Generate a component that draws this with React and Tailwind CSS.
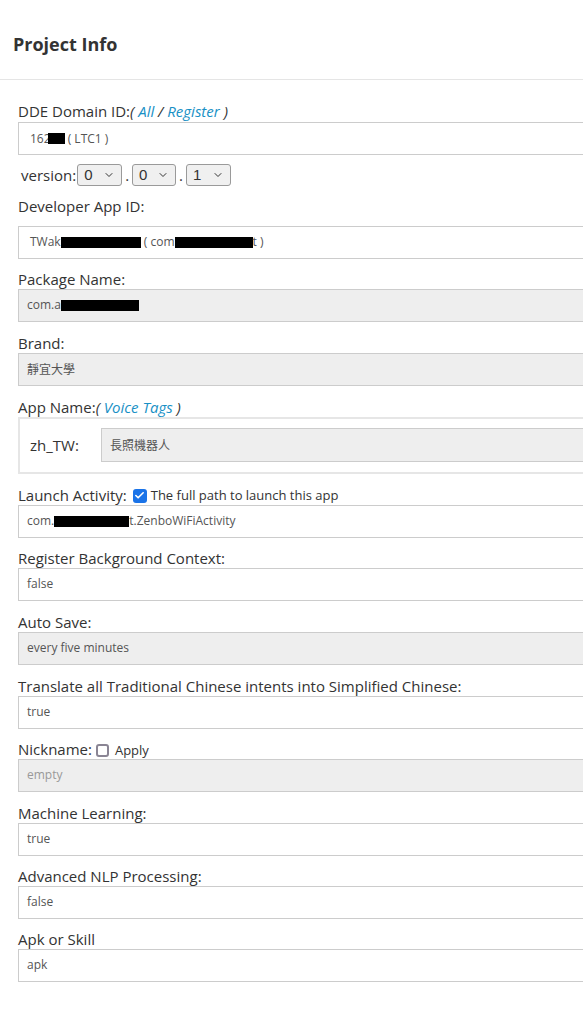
import { Check, ChevronDown } from "lucide-react";

const Redact = ({ w, className = "" }) => (
  <span className={`inline-block h-[11px] bg-black align-[-1px] ${className}`} style={{ width: w }} />
);

const Field = ({ label, children, gray, muted, mb = "mb-[11px]" }) => (
  <div className={mb}>
    <div className="text-[15px] leading-[20px] text-[#333]">{label}</div>
    <div
      className={`w-[600px] h-[33px] border border-[#ccc] flex items-center pl-[8px] text-[12px] ${
        gray ? "bg-[#eee]" : "bg-white"
      } ${muted ? "text-[#999]" : "text-[#555]"}`}
    >
      {children}
    </div>
  </div>
);

const VersionSelect = ({ value, w }) => (
  <div
    className={`${w} h-[22px] rounded-[3px] border border-[#9a9a9a] bg-[#f0f0f0] flex items-center justify-between pl-[6px] pr-[6px] font-['Liberation_Sans',sans-serif] text-[15px] text-[#333]`}
  >
    <span>{value}</span>
    <ChevronDown size={12} strokeWidth={2} className="text-[#333]" />
  </div>
);

const Link = ({ children }) => <span className="italic text-[#1890c5]">{children}</span>;

const App = () => {
  return (
    <div className="w-[583px] min-h-[1018px] bg-white overflow-hidden font-['Open_Sans',sans-serif] text-[#333]">
      <div className="h-[80px] border-b border-[#e5e5e5] flex items-center pl-[13px]">
        <h1 className="text-[18px] font-bold text-[#333] mt-[10px]">Project Info</h1>
      </div>

      <form className="pl-[18px] pt-[21px]">
        <div>
          <div className="text-[15px] leading-[20px]">
            DDE Domain ID:<span className="italic">(</span> <Link>All</Link> <span className="italic">/</span> <Link>Register</Link>{" "}
            <span className="italic">)</span>
          </div>
          <div className="w-[600px] h-[33px] border border-[#ccc] flex items-center pl-[11px] text-[12px] text-[#555] mt-[1px]">
            162
            <Redact w="17px" className="ml-[-3px]" />
            &nbsp;( LTC1 )
          </div>
        </div>

        <div className="flex items-center mt-[9px] ml-[3px] text-[15px]">
          <span className="mr-[1px]">version:</span>
          <VersionSelect value="0" w="w-[45px]" />
          <span className="mx-[3px]">.</span>
          <VersionSelect value="0" w="w-[44px]" />
          <span className="mx-[3px]">.</span>
          <VersionSelect value="1" w="w-[45px]" />
        </div>

        <div className="mt-[9px] mb-[10px]">
          <div className="text-[15px] leading-[20px]">Developer App ID:</div>
          <div className="w-[600px] h-[33px] border border-[#ccc] flex items-center pl-[11px] text-[12px] text-[#555] mt-[10px]">
            TWak
            <Redact w="80px" />
            &nbsp;( com
            <Redact w="78px" />t )
          </div>
        </div>

        <Field label="Package Name:" gray>
          com.a
          <Redact w="78px" />
        </Field>

        <Field label="Brand:" gray>
          <span className="font-['Noto_Sans_CJK_TC',sans-serif]">靜宜大學</span>
        </Field>

        <div className="mb-[11px]">
          <div className="text-[15px] leading-[20px]">
            App Name:<span className="italic">(</span> <Link>Voice Tags</Link> <span className="italic">)</span>
          </div>
          <div className="w-[600px] h-[57px] border-2 border-[#e6e6e6] flex items-center pl-[10px]">
            <span className="text-[15px] w-[71px]">zh_TW:</span>
            <div className="flex-1 h-[34px] border border-[#ccc] bg-[#eee] flex items-center pl-[8px] text-[12px] text-[#555] font-['Noto_Sans_CJK_TC',sans-serif]">
              長照機器人
            </div>
          </div>
        </div>

        <div className="mb-[10px]">
          <div className="h-[20px] text-[15px] leading-[20px] flex items-center">
            Launch Activity:
            <span className="ml-[6px] mr-[4px] mt-[2px] w-[14px] h-[14px] rounded-[3px] bg-[#1a73e8] flex items-center justify-center">
              <Check size={11} strokeWidth={3.5} className="text-white" />
            </span>
            <span className="text-[13px] mt-[1px]">The full path to launch this app</span>
          </div>
          <div className="w-[600px] h-[33px] border border-[#ccc] flex items-center pl-[8px] text-[12px] text-[#555]">
            com.
            <Redact w="75px" />
            t.ZenboWiFiActivity
          </div>
        </div>

        <Field label="Register Background Context:">false</Field>
        <Field label="Auto Save:" gray>
          every five minutes
        </Field>
        <Field label="Translate all Traditional Chinese intents into Simplified Chinese:" mb="mb-[10px]">
          true
        </Field>

        <div className="mb-[11px]">
          <div className="h-[20px] text-[15px] leading-[20px] flex items-center">
            Nickname:
            <span className="ml-[4px] mr-[6px] mt-[4px] w-[13px] h-[13px] rounded-[3px] border-2 border-[#8a8594] bg-white" />
            <span className="text-[13px] mt-[3px]">Apply</span>
          </div>
          <div className="w-[600px] h-[33px] border border-[#ccc] bg-[#eee] flex items-center pl-[8px] text-[12px] text-[#999]">
            empty
          </div>
        </div>

        <Field label="Machine Learning:" mb="mb-[10px]">
          true
        </Field>
        <Field label="Advanced NLP Processing:" mb="mb-[10px]">
          false
        </Field>
        <Field label="Apk or Skill">apk</Field>
      </form>
    </div>
  );
};

export default App;
